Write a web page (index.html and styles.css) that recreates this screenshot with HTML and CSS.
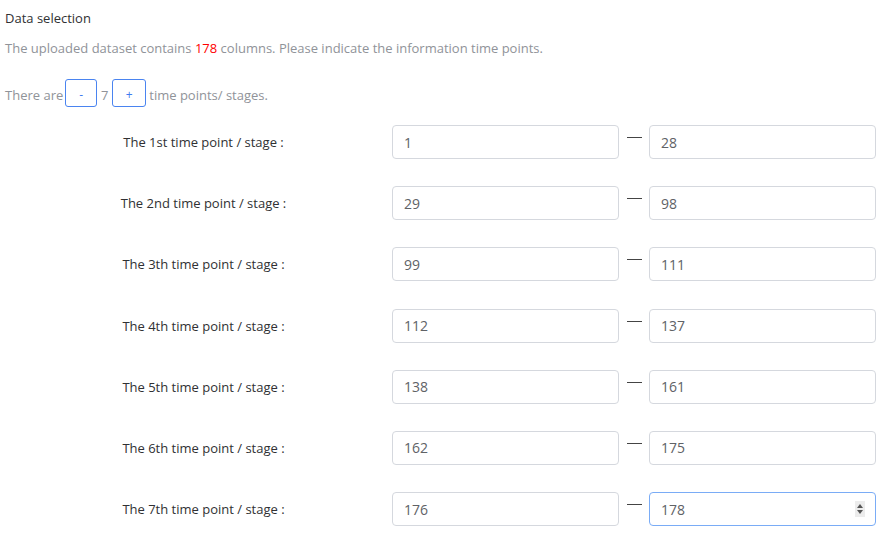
FILE: index.html
```html
<!DOCTYPE html>
<html>
<head>
<meta charset="utf-8">
<link rel="stylesheet" href="styles.css">
</head>
<body>
<div class="page">
  <div class="title">Data selection</div>
  <div class="desc">The uploaded dataset contains <span class="red">178</span> columns. Please indicate the information time points.</div>
  <div class="count">
    <span class="txt">There are</span>
    <span class="btn btn-minus">-</span>
    <span class="txt num">7</span>
    <span class="btn btn-plus">+</span>
    <span class="txt">time points/ stages.</span>
  </div>
  <div class="grid">
    <div class="label">The 1st time point / stage :</div>
    <div class="input">1</div><div class="dash"><i></i></div><div class="input">28</div>
    <div class="label">The 2nd time point / stage :</div>
    <div class="input">29</div><div class="dash"><i></i></div><div class="input">98</div>
    <div class="label">The 3th time point / stage :</div>
    <div class="input">99</div><div class="dash"><i></i></div><div class="input">111</div>
    <div class="label">The 4th time point / stage :</div>
    <div class="input">112</div><div class="dash"><i></i></div><div class="input">137</div>
    <div class="label">The 5th time point / stage :</div>
    <div class="input">138</div><div class="dash"><i></i></div><div class="input">161</div>
    <div class="label">The 6th time point / stage :</div>
    <div class="input">162</div><div class="dash"><i></i></div><div class="input">175</div>
    <div class="label">The 7th time point / stage :</div>
    <div class="input">176</div><div class="dash"><i></i></div><div class="input focused"><span>178</span><span class="spin"><svg width="8" height="14" viewBox="0 0 8 14"><path d="M4 2 L7 6 L1 6 Z M4 12 L7 8 L1 8 Z" fill="#555"/></svg></span></div>
  </div>
</div>
</body>
</html>
```
FILE: styles.css
```css
html, body { margin: 0; padding: 0; background: #fff; }
body { font-family: "Open Sans", "Noto Sans", Arial, sans-serif; font-size: 13px; color: #303133; }
.page { padding: 8px 0 0 0; }
.title { padding-left: 5px; line-height: 20px; color: #303133; }
.desc { padding-left: 5px; margin-top: 10px; line-height: 20px; color: #909399; }
.red { color: #f00; }
.count { display: flex; align-items: center; margin-top: 21px; padding-left: 5px; color: #909399; height: 28px; }
.txt { margin-top: 4px; line-height: 20px; }
.btn { display: flex; align-items: center; justify-content: center; height: 28px; border: 1px solid #4a84f0; border-radius: 3px; color: #3e7bf0; box-sizing: border-box; font-size: 12px; padding-top: 2px; }
.btn-minus { width: 32px; margin-left: 2px; }
.btn-plus { width: 34px; margin-right: 3px; }
.num { width: 15px; text-align: center; }
.grid { display: grid; grid-template-columns: 377px 227px 30px 227px; padding-left: 15px; margin-top: 18px; row-gap: 27.2px; align-items: center; }
.label { text-align: center; color: #303133; }
.input { height: 34px; box-sizing: border-box; border: 1px solid #d5d8de; border-radius: 4px; padding: 0 11px; display: flex; align-items: center; justify-content: space-between; color: #606266; font-size: 14px; }
.input.focused { border-color: #7aacf6; }
.dash { height: 34px; position: relative; }
.dash i { position: absolute; left: 8px; top: 12px; width: 15px; height: 1px; background: #444; }
.spin { width: 10px; height: 16px; background: #ececec; display: flex; align-items: center; justify-content: center; margin-right: -1px; }
```
